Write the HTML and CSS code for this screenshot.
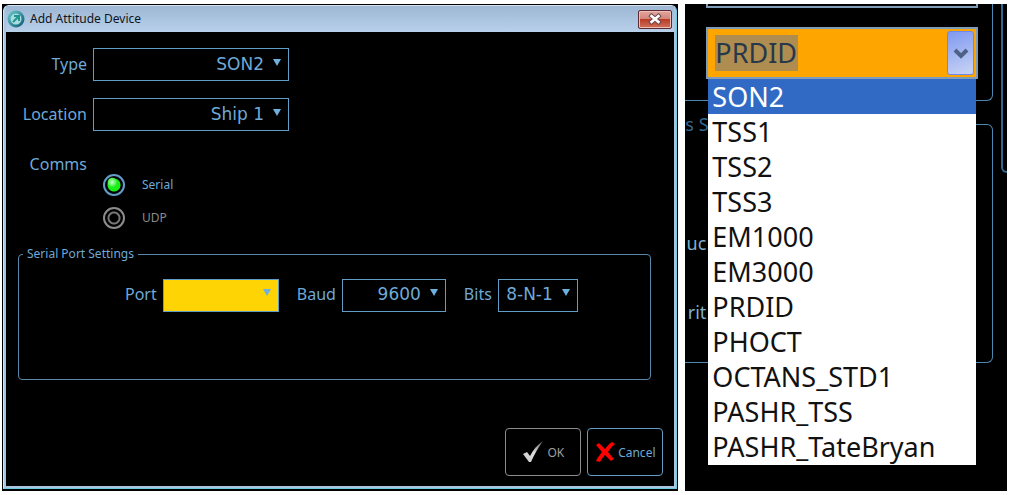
FILE: index.html
```html
<!DOCTYPE html>
<html lang="en">

<head>
    <meta charset="UTF-8">
    <meta name="viewport" content="width=device-width, initial-scale=1.0">
    <title>Add Attitude Device</title>

    <link rel="stylesheet" href="styles.css">
</head>

<body>
    <div class="dialog">
        <div class="dialog-frame">
            <div class="title-bar">
                <svg class="title-icon" width="18" height="18" viewBox="0 0 18 18" aria-hidden="true">
                    <defs>
                        <linearGradient id="ring" x1="0" y1="0" x2="1" y2="1">
                            <stop offset="0" stop-color="#63c5c4" />
                            <stop offset="1" stop-color="#145f7d" />
                        </linearGradient>
                    </defs>
                    <circle cx="9" cy="9" r="7" fill="#a9dcdf" stroke="url(#ring)" stroke-width="3" />
                    <path d="M6 12l5-5M7 6h5v5" fill="none" stroke="#23958f" stroke-width="2" />
                </svg>
                <h1>Add Attitude Device</h1>
                <button class="close-button" type="button" aria-label="Close">
                    <svg width="14" height="12" viewBox="0 0 14 12" aria-hidden="true">
                        <path d="M3.5 3l7 6M10.500 3l-7 6" stroke="#6b4a50" stroke-width="4.500" stroke-linecap="square" />
                        <path d="M3.500 3l7 6M10.500 3l-7 6" stroke="#fff" stroke-width="2.500" stroke-linecap="square" />
                    </svg>
                </button>
            </div>

            <form class="dialog-body">
                <div class="device-grid">
                    <label for="type">Type</label>
                    <div class="select-box">
                        <select id="type">
                            <option>SON2</option>
                        </select>
                    </div>

                    <label for="location">Location</label>
                    <div class="select-box">
                        <select id="location">
                            <option>Ship 1</option>
                        </select>
                    </div>

                    <span class="comms-label" id="comms">Comms</span>
                    <div class="radio-list" role="radiogroup" aria-labelledby="comms">
                        <label class="radio-item">
                            <input type="radio" name="comms" checked>
                            Serial
                        </label>
                        <label class="radio-item radio-off">
                            <input type="radio" name="comms">
                            UDP
                        </label>
                    </div>
                </div>

                <fieldset class="port-settings">
                    <legend>Serial Port Settings</legend>
                    <div class="port-row">
                        <div class="field">
                            <label for="port">Port</label>
                            <div class="select-box select-port">
                                <select id="port">
                                    <option></option>
                                </select>
                            </div>
                        </div>
                        <div class="field">
                            <label for="baud">Baud</label>
                            <div class="select-box select-baud">
                                <select id="baud">
                                    <option>9600</option>
                                </select>
                            </div>
                        </div>
                        <div class="field">
                            <label for="bits">Bits</label>
                            <div class="select-box select-bits">
                                <select id="bits">
                                    <option>8-N-1</option>
                                </select>
                            </div>
                        </div>
                    </div>
                </fieldset>

                <div class="buttons">
                    <button class="button button-ok" type="button">
                        <svg width="22" height="22" viewBox="0 0 22 22" aria-hidden="true">
                            <defs>
                                <linearGradient id="tick" x1="1" y1="0" x2="0" y2="1">
                                    <stop offset="0" stop-color="#555" />
                                    <stop offset="0.5" stop-color="#ddd" />
                                    <stop offset="1" stop-color="#ccc" />
                                </linearGradient>
                            </defs>
                            <path d="M1 13l4-2 3 4C11 9 15 4 21 0C16 7 12 14 9 21H7Z" fill="url(#tick)" />
                        </svg>
                        OK
                    </button>
                    <button class="button" type="button">
                        <svg width="20" height="20" viewBox="0 0 20 20" aria-hidden="true">
                            <path d="M1 3L4 1l6 6c2-3 4-5 7-7l3 2c-3 2-5 5-7 8l6 7-3 2-6-6c-2 2-4 5-5 7l-4-1c1-3 4-6 6-9Z" fill="#f00" />
                        </svg>
                        Cancel
                    </button>
                </div>
            </form>
        </div>
    </div>

    <div class="panel">
        <div class="panel-main">
            <div class="group group-top">
                <div class="previous-box"></div>
                <div class="combo">
                    <input class="combo-input" type="text" value="PRDID" aria-label="Type" role="combobox"
                        aria-expanded="true" aria-controls="typeList">
                    <button class="combo-button" type="button" aria-label="Show types">
                        <svg width="18" height="14" viewBox="0 0 18 14" aria-hidden="true">
                            <path d="M3 4l6 6 6-6" fill="none" stroke="#4d6185" stroke-width="4" />
                        </svg>
                    </button>
                    <ul class="combo-list" id="typeList" role="listbox">
                        <li class="selected" role="option" aria-selected="true">SON2</li>
                        <li role="option">TSS1</li>
                        <li role="option">TSS2</li>
                        <li role="option">TSS3</li>
                        <li role="option">EM1000</li>
                        <li role="option">EM3000</li>
                        <li role="option">PRDID</li>
                        <li role="option">PHOCT</li>
                        <li role="option">OCTANS_STD1</li>
                        <li role="option">PASHR_TSS</li>
                        <li role="option">PASHR_TateBryan</li>
                    </ul>
                </div>
            </div>
            <!-- the open list hides most of this group -->
            <fieldset class="group group-settings">
                <legend>s S</legend>
                <div class="side-label">uc</div>
                <div class="side-label">rit</div>
            </fieldset>
        </div>
        <div class="panel-side"></div>
    </div>
</body>

</html>
```

FILE: styles.css
```css
* {
    box-sizing: border-box;
}

body {
    margin: 0;
    padding: 4px 4px 4px 2px;
    background-color: white;
    display: flex;
    align-items: stretch;
    gap: 7px;
    font-family: "Noto Sans", sans-serif;
    font-size: 16px;
    color: #6fa9d6;
}

button,
input,
select {
    font-family: inherit;
    margin: 0;
}

/* dialog window */

.dialog {
    flex: 675 1 0;
    min-width: 0;
    background-color: black;
    padding: 1px 1px 2px;
}

.dialog-frame {
    background-color: #a9c4df;
    border: 1px solid #d5e3f0;
    border-right-color: #6fcbe0;
    border-bottom-color: #6fcbe0;
    border-radius: 6px 6px 0 0;
    padding: 0 2px 2px;
}

.title-bar {
    height: 26px;
    padding: 0 2px 0 1px;
    background: linear-gradient(#9db7d4, #b8d0ea);
    display: flex;
    align-items: center;
    gap: 5px;
}

.title-bar h1 {
    margin: 0;
    flex: 1;
    font-size: 12px;
    font-weight: 400;
    line-height: 18px;
    color: #0c1420;
}

.close-button {
    width: 34px;
    height: 19px;
    padding: 0;
    border: 1px solid #5b2a35;
    border-radius: 2px;
    background: linear-gradient(#e3a79c 0%, #d5837a 48%, #b83c26 50%, #d2705a 100%);
    box-shadow: inset 0 0 0 1px #eabdb5;
    display: flex;
    align-items: center;
    justify-content: center;
}

.dialog-body {
    background-color: black;
    padding: 16px 11px 10px 12px;
}

.device-grid {
    display: grid;
    grid-template-columns: 69px 196px;
    column-gap: 6px;
    row-gap: 17px;
}

.device-grid > label,
.comms-label {
    line-height: 33px;
    text-align: right;
}

.select-box {
    position: relative;
    height: 33px;
}

.select-box select {
    appearance: none;
    width: 100%;
    height: 100%;
    padding: 0 24px 2px 3px;
    border: 1px solid #629dc8;
    border-radius: 0;
    background-color: black;
    color: #6fa9d6;
    font-family: "DejaVu Sans", sans-serif;
    font-size: 17px;
    text-align-last: right;
}

/* drop-down arrow */
.select-box::after {
    content: "";
    position: absolute;
    top: 11px;
    right: 8px;
    border: 4px solid transparent;
    border-top: 7px solid #6fb0df;
    border-bottom: 0;
    pointer-events: none;
}

.radio-list {
    padding: 26px 0 0 10px;
    display: flex;
    flex-direction: column;
    gap: 11px;
}

.radio-item {
    display: flex;
    align-items: center;
    gap: 17px;
    font-size: 12px;
    line-height: 22px;
}

.radio-item input {
    appearance: none;
    width: 22px;
    height: 22px;
    border: 2px solid #629dc8;
    border-radius: 50%;
    background: radial-gradient(circle, black 4px, #777 5px, #777 6px, black 7px);
}

.radio-item input:checked {
    background: radial-gradient(circle at 40% 35%, #c8ffc8 0, #4bf04b 4px, transparent 5px),
        radial-gradient(circle, #18f018 6px, black 7px);
}

.radio-off {
    color: #8c8c8c;
}

.radio-off input {
    border-color: #8c8c8c;
}

.port-settings {
    margin: 17px 12px 0 0;
    padding: 16px 0 68px 106px;
    min-width: 0;
    border: 1px solid #5b87a8;
    border-radius: 4px;
}

.port-settings legend {
    margin-left: -102px;
    padding: 0 4px;
    font-size: 12px;
    line-height: 16px;
}

.port-row {
    display: flex;
    gap: 18px;
}

.field {
    display: flex;
    gap: 6px;
    line-height: 33px;
}

.select-port {
    width: 116px;
}

.select-port select {
    background-color: #ffd405;
}

.select-baud {
    width: 104px;
}

.select-bits {
    width: 80px;
}

.buttons {
    margin-top: 48px;
    display: flex;
    justify-content: flex-end;
    gap: 6px;
}

.button {
    width: 76px;
    height: 48px;
    padding: 0;
    border: 1px solid #629dc8;
    border-radius: 4px;
    background-color: black;
    color: #6fa9d6;
    font-size: 12px;
    display: flex;
    align-items: center;
    justify-content: center;
    gap: 3px;
}

.button-ok {
    border-color: #8c8c8c;
    color: #a0a0a0;
}

/* panel with the open type list */

.panel {
    flex: 322 1 0;
    min-width: 0;
    overflow: hidden;
    background-color: black;
    display: flex;
    gap: 8px;
}

.panel-main {
    flex: 1;
    min-width: 0;
}

.panel-side {
    width: 6px;
    height: 169px;
    border-left: 2px solid #35688f;
    border-bottom: 2px solid #35688f;
    border-radius: 0 0 0 6px;
}

.group {
    margin: 0;
    border: 1px solid #4d88b3;
    border-left: 0;
}

.group-top {
    border-top: 0;
    border-radius: 0 0 6px 0;
    padding: 0 14px 21px 21px;
}

.previous-box {
    height: 4px;
    border: 2px solid #7f9db9;
    border-top: 0;
    margin-bottom: 19px;
}

.combo {
    position: relative;
    height: 52px;
    padding: 0 2px 0 7px;
    border: 2px solid #7f9db9;
    background-color: #ffa500;
    display: flex;
    align-items: center;
    justify-content: space-between;
}

.combo-input {
    width: 83px;
    height: 36px;
    padding: 0;
    border: 0;
    background-color: #af8c50;
    color: #27384a;
    font-size: 27px;
    line-height: 36px;
}

.combo-button {
    width: 27px;
    height: 44px;
    padding: 0;
    border: 1px solid #6f87e8;
    border-radius: 3px;
    background: linear-gradient(160deg, #8099f0, #c8d4f4);
    display: flex;
    align-items: center;
    justify-content: center;
}

.combo-list {
    position: absolute;
    top: 50px;
    left: 0;
    right: 0;
    margin: 0;
    padding: 0 0 1px;
    list-style: none;
    background-color: white;
    color: #111;
    font-size: 27px;
    line-height: 35px;
}

.combo-list li {
    padding-left: 4px;
}

.combo-list .selected {
    background-color: #316ac5;
    color: white;
}

.group-settings {
    margin-top: 11px;
    padding: 95px 0 38px;
    min-width: 0;
    border-radius: 0 6px 6px 0;
    color: #7fb0cc;
    font-size: 18px;
}

.group-settings legend {
    padding: 0;
    line-height: 24px;
    color: #35688f;
}

.side-label {
    width: 21px;
    line-height: 24px;
    text-align: right;
}

.side-label + .side-label {
    margin-top: 45px;
}
```
